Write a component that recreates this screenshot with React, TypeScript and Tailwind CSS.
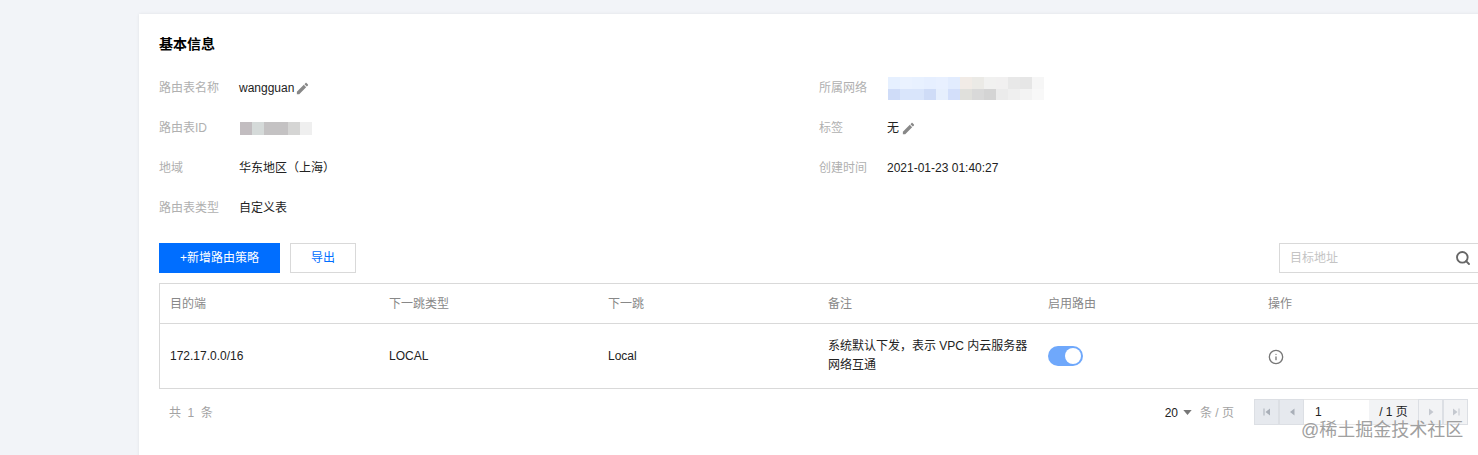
import { Info, Search } from 'lucide-react';

const FONT = 'font-["Liberation_Sans","Noto_Sans_CJK_SC",sans-serif]';
const GRID = 'grid grid-cols-[219px_219px_220px_220px_220px_1fr] items-center';

function PencilIcon() {
  return (
    <svg viewBox="0 0 24 24" className="h-[15px] w-[15px] fill-[#888888]">
      <path d="M3 17.25V21h3.75L17.81 9.94l-3.75-3.75L3 17.25zM20.71 7.04c.39-.39.39-1.02 0-1.41l-2.34-2.34c-.39-.39-1.02-.39-1.41 0l-1.83 1.83 3.75 3.75 1.83-1.83z" />
    </svg>
  );
}

// Mosaic blocks that hide the blurred values
const idBlocks = ['#c2bdc0', '#d5dad9', '#c4c2c3', '#c4c2c3', '#d5d5d4', '#efefef'];
const netTop = ['#e6f0ff', '#eaf2ff', '#e8f1ff', '#e6efff', '#e8f0ff', '#e2ecfe', '#f1ebe6', '#ebeae6', '#f1f1f0', '#f1f0f0', '#e8e8e8', '#e6e6e6', '#f6f6f6'];
const netBottom = ['#cfdcf8', '#d9e5fb', '#d9e5fb', '#cfdcf7', '#e6effd', '#d3dffa', '#e0e0dc', '#d9d9d9', '#d4d4d4', '#ebebeb', '#efefef', '#f3f3f3', '#f8f8f8'];

function Blocks({ colors, height }: { colors: string[]; height: string }) {
  return (
    <div className={`flex ${height}`}>
      {colors.map((c, i) => (
        <div key={i} className="w-3" style={{ backgroundColor: c }} />
      ))}
    </div>
  );
}

function InfoRow({ label, width, children }: { label: string; width: string; children: React.ReactNode }) {
  return (
    <div className="flex h-10 items-center">
      <div className={`${width} text-[#b0b0b0]`}>{label}</div>
      <div className="flex items-center text-[#222222]">{children}</div>
    </div>
  );
}

function PageButton({ d, light }: { d: string; light?: boolean }) {
  return (
    <div className={`flex h-[26px] w-[25px] items-center justify-center border border-[#dcdfe4] ${light ? 'bg-[#f2f3f5]' : 'bg-[#e6e9ee]'}`}>
      <svg viewBox="0 0 10 10" className={`h-[10px] w-[10px] ${light ? 'fill-[#c4c8cf]' : 'fill-[#a9afb8]'}`}>
        <path d={d} />
      </svg>
    </div>
  );
}

const columns = ['目的端', '下一跳类型', '下一跳', '备注', '启用路由', '操作'];

export default function App() {
  return (
    <div className={`relative h-[455px] w-[1478px] overflow-hidden bg-[#f2f4f8] pl-[139px] pt-[14px] text-xs ${FONT}`}>
      <div className="h-[500px] w-[1360px] bg-white px-5 pt-5 shadow-[0_0_3px_rgba(0,0,0,0.08)]">
        <h2 className="text-sm/5 font-bold text-black">基本信息</h2>

        <div className="mt-[14px] grid grid-cols-[660px_1fr]">
          <div>
            <InfoRow label="路由表名称" width="w-20">
              wangguan
              <span className="ml-[1px]"><PencilIcon /></span>
            </InfoRow>
            <InfoRow label="路由表ID" width="w-20">
              <div className="ml-[1px] mt-[1px]"><Blocks colors={idBlocks} height="h-[13px]" /></div>
            </InfoRow>
            <InfoRow label="地域" width="w-20">华东地区（上海）</InfoRow>
            <InfoRow label="路由表类型" width="w-20">自定义表</InfoRow>
          </div>
          <div>
            <InfoRow label="所属网络" width="w-[68px]">
              <div className="ml-[1px] flex flex-col">
                <Blocks colors={netTop} height="h-3" />
                <Blocks colors={netBottom} height="h-[11px]" />
              </div>
            </InfoRow>
            <InfoRow label="标签" width="w-[68px]">
              无
              <span className="ml-[2px]"><PencilIcon /></span>
            </InfoRow>
            <InfoRow label="创建时间" width="w-[68px]">2021-01-23 01:40:27</InfoRow>
          </div>
        </div>

        <div className="mt-[15px] flex h-[30px] items-center justify-between">
          <div className="flex gap-[10px]">
            <button className="h-[30px] w-[121px] bg-[#006eff] text-white">+新增路由策略</button>
            <button className="h-[30px] w-[66px] border border-[#d9d9d9] bg-white text-[#006eff]">导出</button>
          </div>
          <div className="flex h-[30px] w-[200px] items-center justify-between border border-[#d9d9d9] pl-[10px] pr-[7px]">
            <span className="text-[#c4c4c4]">目标地址</span>
            <Search className="h-4 w-4 text-[#666666]" strokeWidth={2.8} />
          </div>
        </div>

        <div className="mt-[10px] h-[106px] border border-[#d9d9d9]">
          <div className={`${GRID} h-10 border-b border-[#d9d9d9] text-[#888888]`}>
            {columns.map((c) => (
              <div key={c} className="px-[10px]">{c}</div>
            ))}
          </div>
          <div className={`${GRID} h-16 text-[#222222]`}>
            <div className="px-[10px]">172.17.0.0/16</div>
            <div className="px-[10px]">LOCAL</div>
            <div className="px-[10px]">Local</div>
            <div className="px-[10px]">
              <div className="w-[204px] leading-[19px]">系统默认下发，表示 VPC 内云服务器网络互通</div>
            </div>
            <div className="px-[10px]">
              <div className="flex h-5 w-[35px] items-center justify-end rounded-full bg-[#6fa8fb] pr-[2px]">
                <div className="h-4 w-4 rounded-full bg-white" />
              </div>
            </div>
            <div className="px-[10px]">
              <Info className="mt-[2px] h-4 w-4 text-[#777777]" strokeWidth={2} />
            </div>
          </div>
        </div>

        <div className="mt-[10px] flex h-[26px] items-center justify-between pl-[10px] pr-[11px]">
          <div className="pt-[2px] tracking-[1.6px] text-[#a3a3a3]">共 1 条</div>
          <div className="flex items-center">
            <span className="pt-[1px] text-[#222222]">20</span>
            <svg viewBox="0 0 10 6" className="ml-[5px] h-[5px] w-[9px] fill-[#777777]">
              <path d="M0 0h10L5 6z" />
            </svg>
            <span className="ml-[8px] mr-[20px] pt-[1px] text-[#a3a3a3]">条 / 页</span>
            <PageButton d="M1.5 1.5h1v7h-1zM8 1.5v7L3.5 5z" />
            <PageButton d="M7.5 1.5v7L3 5z" />
            <div className="flex h-[26px] w-[65px] items-center border-y border-[#e6e6e6] bg-white pl-[11px] text-[#222222]">1</div>
            <div className="flex h-[26px] w-[49px] items-center justify-center border-y border-[#e6e6e6] bg-[#f2f3f5] text-[#222222]">/ 1 页</div>
            <PageButton light d="M3 1.5v7L7.5 5z" />
            <PageButton light d="M2 1.5v7L6.5 5zM7.5 1.5h1v7h-1z" />
          </div>
        </div>
      </div>

      <div className="absolute left-[1301px] top-[418px] whitespace-nowrap text-lg/[24px] text-[#a0a0a0] [text-shadow:0_0_1px_rgba(255,255,255,0.8)]">
        @稀土掘金技术社区
      </div>
    </div>
  );
}
